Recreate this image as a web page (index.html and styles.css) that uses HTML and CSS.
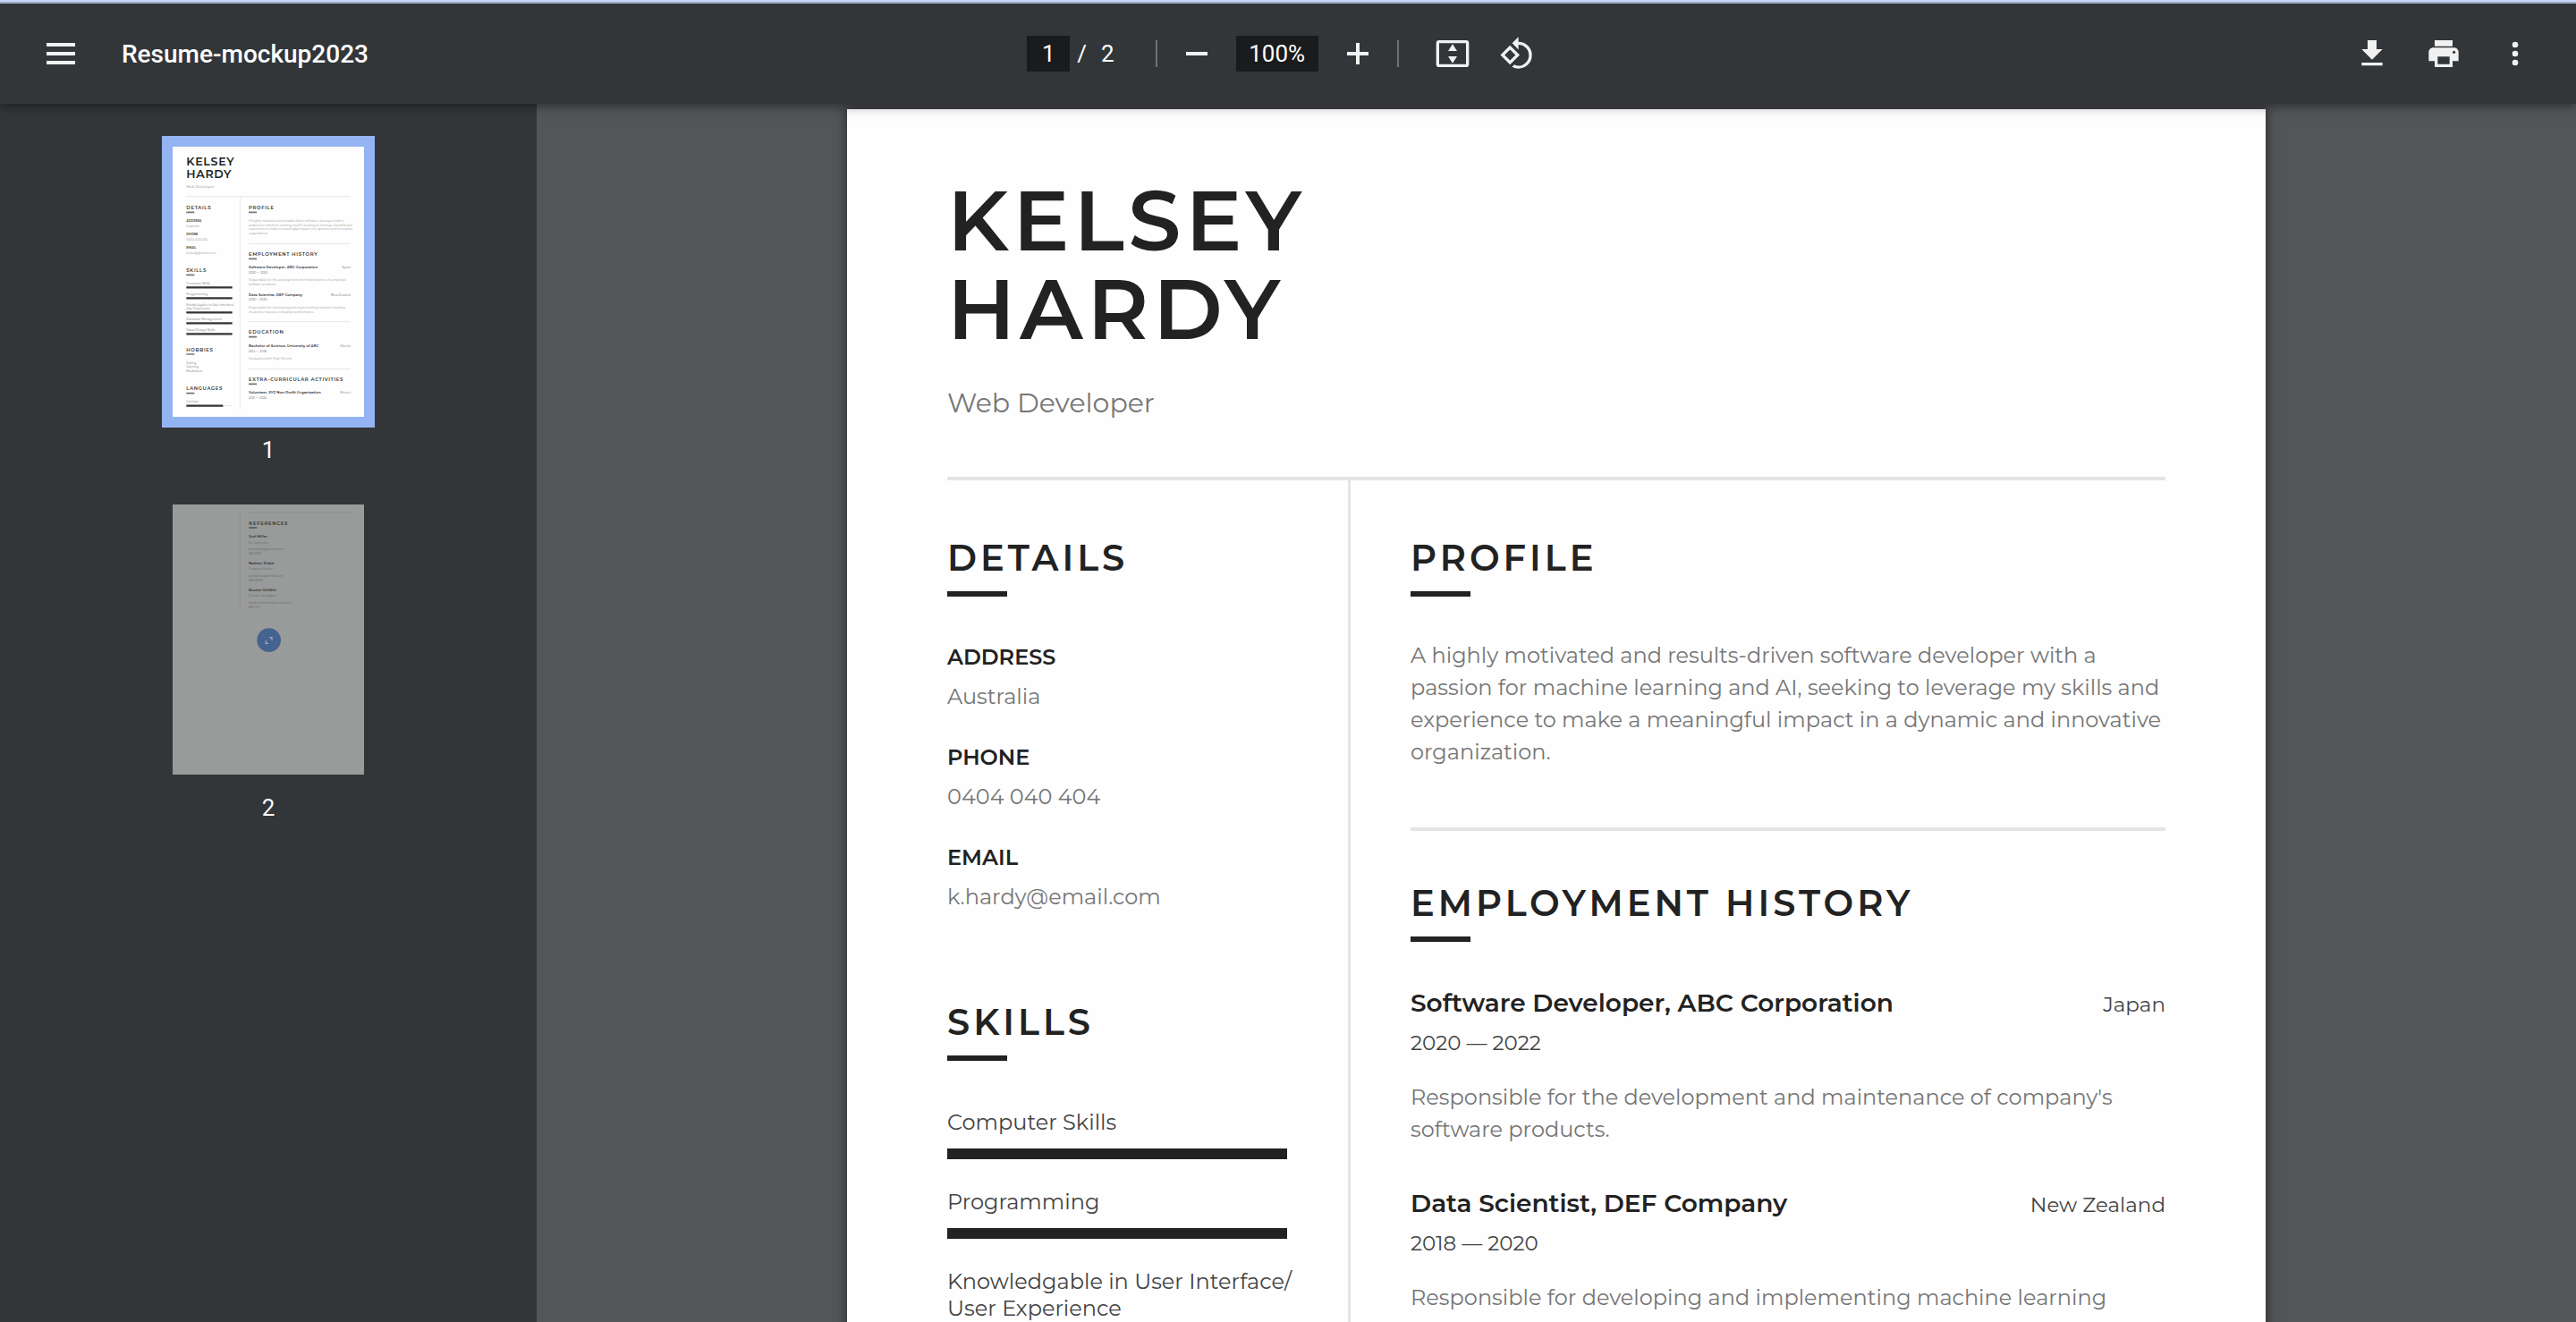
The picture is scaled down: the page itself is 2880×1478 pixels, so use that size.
FILE: index.html
```html
<!DOCTYPE html>
<html lang="en">
<head>
<meta charset="utf-8">
<meta name="viewport" content="width=device-width, initial-scale=1">
<title>Resume-mockup2023</title>
<link rel="stylesheet" href="styles.css">
</head>
<body>
<header class="toolbar">
  <div class="toolbar-start">
    <button class="icon-button" type="button" aria-label="Menu">
      <svg class="icon-menu" viewBox="0 0 32 24"><path d="M0 0h32v4H0zM0 10h32v4H0zM0 20h32v4H0z"/></svg>
    </button>
    <span class="file-name">Resume-mockup2023</span>
  </div>
  <div class="toolbar-center">
    <input class="field page-field" type="text" value="1" aria-label="Page number">
    <span class="page-total"><span>/</span><span>2</span></span>
    <span class="divider"></span>
    <button class="icon-button" type="button" aria-label="Zoom out">
      <svg class="icon" viewBox="0 0 40 40"><path d="M8 18h24v4H8z"/></svg>
    </button>
    <input class="field zoom-field" type="text" value="100%" aria-label="Zoom level">
    <button class="icon-button" type="button" aria-label="Zoom in">
      <svg class="icon" viewBox="0 0 40 40"><path d="M8 18h10V8h4v10h10v4H22v10h-4V22H8z"/></svg>
    </button>
    <span class="divider"></span>
    <div class="view-tools">
      <button class="icon-button" type="button" aria-label="Fit to page">
        <svg class="icon" viewBox="0 0 24 24"><path fill-rule="evenodd" d="M3 3h18a2 2 0 0 1 2 2v14a2 2 0 0 1-2 2H3a2 2 0 0 1-2-2V5a2 2 0 0 1 2-2zm0 2v14h18V5zM12 5.6l3 4.6H9zM12 18.4l3-4.6H9z"/></svg>
      </button>
      <button class="icon-button" type="button" aria-label="Rotate counterclockwise">
        <svg class="icon" viewBox="0 0 24 24"><path d="M7.34 6.41L.86 12.9l6.49 6.48 6.49-6.48-6.5-6.49zM3.69 12.9l3.66-3.66L11 12.9l-3.66 3.66-3.65-3.66zm15.67-6.26A8.95 8.95 0 0 0 13 4V.76L8.76 5 13 9.24V6c1.79 0 3.58.68 4.95 2.05a7.007 7.007 0 0 1 0 9.9 6.973 6.973 0 0 1-7.79 1.44l-1.49 1.49C10.02 21.62 11.51 22 13 22c2.3 0 4.61-.88 6.36-2.64a8.98 8.98 0 0 0 0-12.72z"/></svg>
      </button>
    </div>
  </div>
  <div class="toolbar-end">
    <button class="icon-button" type="button" aria-label="Download">
      <svg class="icon" viewBox="0 0 24 24"><path d="M19 9h-4V3H9v6H5l7 7 7-7zM5 18v2h14v-2H5z"/></svg>
    </button>
    <button class="icon-button" type="button" aria-label="Print">
      <svg class="icon" viewBox="0 0 24 24"><path d="M19 8H5c-1.66 0-3 1.34-3 3v6h4v4h12v-4h4v-6c0-1.66-1.34-3-3-3zm-3 11H8v-5h8v5zm3-7c-.55 0-1-.45-1-1s.45-1 1-1 1 .45 1 1-.45 1-1 1zm-1-9H6v4h12V3z"/></svg>
    </button>
    <button class="icon-button" type="button" aria-label="More actions">
      <svg class="icon" viewBox="0 0 24 24"><circle cx="12" cy="6" r="2"/><circle cx="12" cy="12" r="2"/><circle cx="12" cy="18" r="2"/></svg>
    </button>
  </div>
</header>

<div class="viewer">
  <nav class="sidebar" aria-label="Page thumbnails">
    <div class="thumb">
      <button class="thumb-button selected" type="button" aria-label="Page 1">
        <svg class="thumb-page" viewBox="0 0 642 906">
          <g class="t-rule"><path d="M46 167h551M226 167v711M255 326h342M255 587h342M255 746h342"/></g>
          <g class="t-name"><text x="46" y="64">KELSEY</text><text x="46" y="105">HARDY</text></g>
          <text class="t-role" x="46" y="138">Web Developer</text>
          <g class="t-head">
            <text x="46" y="210">DETAILS</text><text x="46" y="420">SKILLS</text><text x="46" y="687">HOBBIES</text><text x="46" y="817">LANGUAGES</text>
            <text x="255" y="210">PROFILE</text><text x="255" y="366">EMPLOYMENT HISTORY</text><text x="255" y="628">EDUCATION</text><text x="255" y="786">EXTRA-CURRICULAR ACTIVITIES</text>
          </g>
          <g class="t-dash"><path d="M46 220h27M46 430h27M46 696h27M46 827h27M255 220h27M255 376h27M255 638h27M255 796h27"/></g>
          <g class="t-label"><text x="46" y="252">ADDRESS</text><text x="46" y="297">PHONE</text><text x="46" y="342">EMAIL</text></g>
          <g class="t-body">
            <text x="46" y="270">Australia</text><text x="46" y="315">0404 040 404</text><text x="46" y="360">k.hardy@email.com</text>
            <text x="255" y="251">A highly motivated and results-driven software developer with a</text>
            <text x="255" y="266">passion for machine learning and AI, seeking to leverage my skills and</text>
            <text x="255" y="280">experience to make a meaningful impact in a dynamic and innovative</text>
            <text x="255" y="295">organization.</text>
            <text x="255" y="451">Responsible for the development and maintenance of company's</text>
            <text x="255" y="466">software products.</text>
            <text x="255" y="542">Responsible for developing and implementing machine learning</text>
            <text x="255" y="557">models to improve company's performance.</text>
            <text x="255" y="713">Graduated with High Honors</text>
          </g>
          <g class="t-text">
            <text x="46" y="462">Computer Skills</text><text x="46" y="498">Programming</text><text x="46" y="534">Knowledgable in User Interface/</text><text x="46" y="546">User Experience</text><text x="46" y="582">Database Management</text><text x="46" y="618">Visual Design Skills</text>
            <text x="46" y="728">Eating</text><text x="46" y="742">Gaming</text><text x="46" y="757">Meditation</text><text x="46" y="858">German</text>
            <text x="255" y="427">2020 — 2022</text><text x="255" y="517">2018 — 2020</text><text x="255" y="689">2014 — 2018</text><text x="255" y="847">2021 — 2022</text>
          </g>
          <g class="t-text t-end"><text x="597" y="409">Japan</text><text x="597" y="500">New Zealand</text><text x="597" y="672">Alberta</text><text x="597" y="829">Mexico</text></g>
          <g class="t-job"><text x="255" y="409">Software Developer, ABC Corporation</text><text x="255" y="500">Data Scientist, DEF Company</text><text x="255" y="672">Bachelor of Science, University of ABC</text><text x="255" y="829">Volunteer, XYZ Non-Profit Organisation</text></g>
          <path class="t-rule" d="M46 869h154"/>
          <g class="t-bar"><path d="M46 472h154M46 508h154M46 556h154M46 592h154M46 628h154M46 869h123"/></g>
        </svg>
      </button>
      <span class="thumb-label">1</span>
    </div>
    <div class="thumb">
      <button class="thumb-button" type="button" aria-label="Page 2">
        <svg class="thumb-page muted" viewBox="0 0 642 906">
          <g class="t-rule"><path d="M226 25v326M255 27h346"/></g>
          <g class="t-head"><text x="256" y="68">REFERENCES</text></g>
          <g class="t-dash"><path d="M256 78h27"/></g>
          <g class="t-job"><text x="255" y="112">Joel Miller</text><text x="255" y="201">Nathan Drake</text><text x="255" y="291">Booker DeWitt</text></g>
          <g class="t-text"><text x="255" y="131">Ex-Carpenter</text><text x="255" y="220">Treasure Hunter</text><text x="255" y="310">Private Investigator</text></g>
          <g class="t-body">
            <text x="255" y="153">thelastofus@email.com</text><text x="255" y="167">555-0101</text>
            <text x="255" y="243">uncharted@email.com</text><text x="255" y="257">555-0000</text>
            <text x="255" y="332">bioshockinfinite@email.com</text><text x="255" y="347">555-1111</text>
          </g>
          <circle class="t-badge" cx="323" cy="455" r="40"/>
          <path class="t-arrows" d="M325 446h8v9M313 457v9h8"/>
        </svg>
      </button>
      <span class="thumb-label">2</span>
    </div>
  </nav>

  <main class="canvas">
    <article class="sheet">
      <header class="sheet-head">
        <h1 class="name">KELSEY<br>HARDY</h1>
        <p class="role">Web Developer</p>
      </header>
      <div class="columns">
        <div class="aside">
          <section>
            <h2 class="heading">DETAILS</h2>
            <dl class="details">
              <div><dt>ADDRESS</dt><dd>Australia</dd></div>
              <div><dt>PHONE</dt><dd>0404 040 404</dd></div>
              <div><dt>EMAIL</dt><dd>k.hardy@email.com</dd></div>
            </dl>
          </section>
          <section>
            <h2 class="heading">SKILLS</h2>
            <ul class="skills">
              <li>Computer Skills<span class="bar"></span></li>
              <li>Programming<span class="bar"></span></li>
              <li>Knowledgable in User Interface/<br>User Experience<span class="bar"></span></li>
            </ul>
          </section>
        </div>
        <div class="content">
          <section>
            <h2 class="heading">PROFILE</h2>
            <p class="copy">A highly motivated and results-driven software developer with a<br>passion for machine learning and AI, seeking to leverage my skills and<br>experience to make a meaningful impact in a dynamic and innovative<br>organization.</p>
          </section>
          <section class="ruled">
            <h2 class="heading">EMPLOYMENT HISTORY</h2>
            <div class="jobs">
              <div>
                <div class="job-head"><h3 class="job-title">Software Developer, ABC Corporation</h3><span class="meta">Japan</span></div>
                <p class="meta dates">2020 — 2022</p>
                <p class="copy">Responsible for the development and maintenance of company's<br>software products.</p>
              </div>
              <div>
                <div class="job-head"><h3 class="job-title">Data Scientist, DEF Company</h3><span class="meta">New Zealand</span></div>
                <p class="meta dates">2018 — 2020</p>
                <p class="copy">Responsible for developing and implementing machine learning</p>
              </div>
            </div>
          </section>
        </div>
      </div>
    </article>
  </main>
</div>
</body>
</html>
```
FILE: styles.css
```css
:root {
  --chrome: #323639;
  --field: #191b1c;
  --icon: #f1f1f1;
  --ink: #222222;
  --grey: #767676;
  --rule: #e4e4e4;
}

* { box-sizing: border-box; }

body {
  margin: 0;
  height: 100vh;
  overflow: hidden;
  display: flex;
  flex-direction: column;
  border-top: 2px solid #c9d7f6;
  background: #525659;
  font-family: Roboto, sans-serif;
}

h1, h2, h3, p, ul, dl, dd { margin: 0; padding: 0; }
ul { list-style: none; }

/* Toolbar */
.toolbar {
  position: relative;
  z-index: 1;
  flex: none;
  display: grid;
  grid-template-columns: 1fr auto 1fr;
  align-items: center;
  height: 114px;
  padding: 0 36px;
  border-top: 2px solid #9fabc3;
  background: var(--chrome);
  box-shadow: 0 2px 12px rgba(0, 0, 0, 0.5);
  color: #ffffff;
  font-size: 26px;
}
.toolbar-start, .toolbar-center, .toolbar-end { display: flex; align-items: center; }
.toolbar-start { gap: 36px; }
.toolbar-center { gap: 12px; padding-right: 4px; }
.toolbar-end { gap: 16px; justify-content: flex-end; }
.file-name { font-size: 28px; font-weight: 500; }

.icon-button {
  width: 64px;
  height: 64px;
  padding: 0;
  border: 0;
  border-radius: 50%;
  background: none;
  display: grid;
  place-items: center;
}
.icon, .icon-menu { display: block; fill: var(--icon); }
.icon { width: 40px; height: 40px; }
.icon-menu { width: 32px; height: 24px; }

.field {
  height: 40px;
  padding: 0;
  border: 0;
  background: var(--field);
  color: #ffffff;
  font: inherit;
  text-align: center;
}
.page-field { width: 48px; }
.zoom-field { width: 92px; }
.page-total { display: flex; gap: 16px; margin-right: 34px; margin-left: -4px; }
.divider { width: 2px; height: 30px; background: #6f7274; }
.view-tools { display: flex; gap: 8px; margin-left: 16px; }

/* Viewer */
.viewer { flex: 1; min-height: 0; display: flex; }
.sidebar {
  flex: none;
  width: 600px;
  padding-top: 36px;
  display: flex;
  flex-direction: column;
  align-items: center;
  gap: 33px;
  background: var(--chrome);
}
.thumb { display: flex; flex-direction: column; align-items: center; gap: 9px; }
.thumb-button { padding: 0; border: 12px solid transparent; background: none; }
.thumb-button.selected { border-color: #93b3f2; }
.thumb-page { display: block; width: 214px; height: 302px; background: #fefefe; font-family: Montserrat, Inter, sans-serif; }
.thumb-page.muted { background: #999b9a; }
.thumb-label { color: #ffffff; font-size: 26px; line-height: 32px; }

.t-rule, .t-dash, .t-bar, .t-arrows { fill: none; }
.t-rule { stroke: #e6e6e6; stroke-width: 3px; }
.t-dash { stroke: #777777; stroke-width: 5px; }
.t-bar { stroke: #333333; stroke-width: 7px; }
.t-name { font-size: 38px; font-weight: 600; fill: #222222; letter-spacing: 2px; }
.t-role { font-size: 12px; fill: #777777; }
.t-head { font-size: 16px; font-weight: 600; fill: #333333; letter-spacing: 2px; }
.t-label { font-size: 10px; font-weight: 600; fill: #333333; }
.t-body { font-size: 10px; fill: #8a8a8a; }
.t-text { font-size: 10px; fill: #666666; }
.t-end { text-anchor: end; }
.t-job { font-size: 12px; font-weight: 600; fill: #333333; }
.muted .t-rule { stroke: #8d8f8e; }
.muted .t-dash { stroke: #55585a; }
.muted .t-head, .muted .t-job { fill: #303336; }
.muted .t-text, .muted .t-body { fill: #5c5f60; }
.t-badge { fill: #446390; }
.t-arrows { stroke: #a3adba; stroke-width: 4px; }

.canvas {
  flex: 1;
  min-width: 0;
  padding-top: 6px;
  overflow: hidden;
}
.sheet {
  max-width: 1586px;
  min-height: 100%;
  margin: 0 auto;
  padding: 75px 112px 0;
  background: #fefefe;
  box-shadow: 0 0 10px 2px rgba(30, 24, 28, 0.6);
  color: var(--ink);
  font-family: Montserrat, Inter, sans-serif;
  font-size: 24px;
  line-height: 36px;
}
.sheet-head { padding-bottom: 62px; border-bottom: 4px solid var(--rule); }
.name { font-size: 94px; line-height: 99px; font-weight: 600; letter-spacing: 5px; }
.role { margin-top: 36px; font-size: 30px; line-height: 40px; color: var(--grey); }

.columns { display: flex; }
.aside {
  flex: 0 0 451px;
  min-width: 0;
  padding: 63px 68px 0 0;
  border-right: 3px solid var(--rule);
  display: grid;
  grid-template-columns: minmax(0, 1fr);
  align-content: start;
  gap: 98px;
}
.content { flex: 1; min-width: 0; padding: 63px 0 0 67px; }

.heading { font-size: 40px; line-height: 48px; font-weight: 600; letter-spacing: 4px; }
.heading::after {
  content: "";
  display: block;
  width: 67px;
  height: 6px;
  margin: 13px 0 48px;
  background: var(--ink);
}

.details { display: flex; flex-direction: column; gap: 32px; padding-top: 2px; }
.details dt { margin-bottom: 8px; font-weight: 600; }
.details dd { color: var(--grey); }

.skills {
  display: flex;
  flex-direction: column;
  gap: 33px;
  padding-top: 6px;
  line-height: 30px;
  color: #444444;
  white-space: nowrap;
}
.bar { display: block; height: 12px; margin-top: 14px; background: var(--ink); }

.copy { color: var(--grey); }
.ruled { margin-top: 66px; padding-top: 57px; border-top: 4px solid var(--rule); }
.jobs { display: flex; flex-direction: column; gap: 44px; }
.job-head { display: flex; justify-content: space-between; align-items: baseline; }
.job-title { font-size: 28px; line-height: 40px; font-weight: 600; }
.meta { font-size: 23px; line-height: 32px; color: #444444; }
.dates { margin: 9px 0 27px; }
```
